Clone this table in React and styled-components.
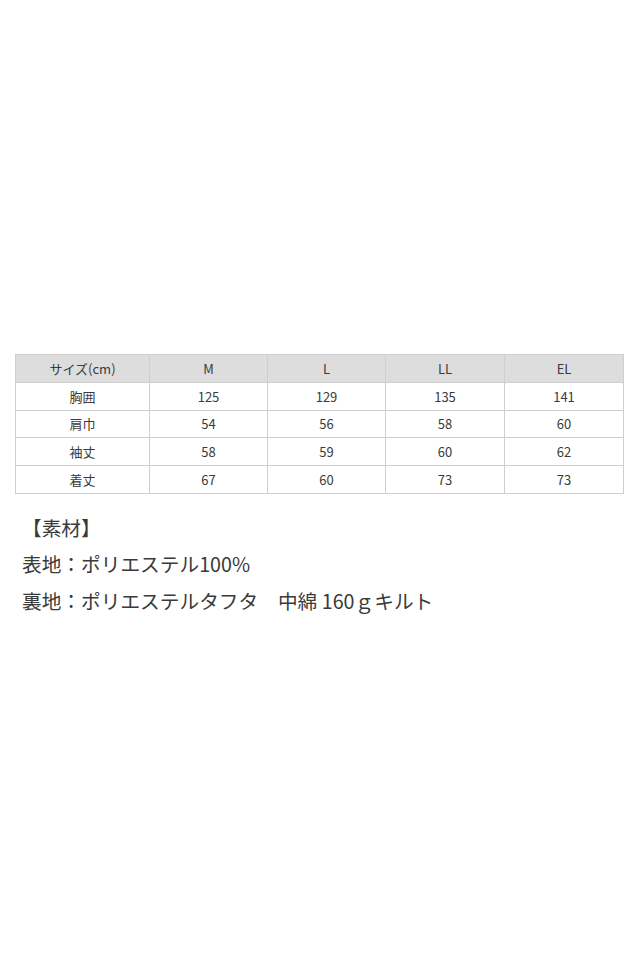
import styled, { createGlobalStyle } from "styled-components";

const GlobalStyle = createGlobalStyle`
  body {
    margin: 0;
    background: #fff;
    font-family: "Noto Sans CJK JP", "Noto Sans", sans-serif;
    color: #333;
  }
`;

const columns = [134, 118, 118, 119, 119];
const header = ["サイズ(cm)", "M", "L", "LL", "EL"];
const rows = [
  ["胸囲", "125", "129", "135", "141"],
  ["肩巾", "54", "56", "58", "60"],
  ["袖丈", "58", "59", "60", "62"],
  ["着丈", "67", "60", "73", "73"],
];

function App() {
  return (
    <Page>
      <GlobalStyle />
      <SizeTable>
        <colgroup>
          {columns.map((w, i) => (
            <col key={i} style={{ width: w }} />
          ))}
        </colgroup>
        <thead>
          <tr>
            {header.map((h) => (
              <HeadCell key={h}>{h}</HeadCell>
            ))}
          </tr>
        </thead>
        <tbody>
          {rows.map((row) => (
            <tr key={row[0]}>
              {row.map((v, i) => (
                <Cell key={i}>{v}</Cell>
              ))}
            </tr>
          ))}
        </tbody>
      </SizeTable>
      <Material>
        <Line>【素材】</Line>
        <Line>表地：ポリエステル100%</Line>
        <Line>裏地：ポリエステルタフタ　中綿 160ｇキルト</Line>
      </Material>
    </Page>
  );
}

const Page = styled.div`
  padding: 354px 17px 0 15px;
  min-height: 960px;
  box-sizing: border-box;
`;

const SizeTable = styled.table`
  width: 608px;
  border-collapse: collapse;
  table-layout: fixed;
  font-size: 13px;
  color: #3a3a3a;
`;

const HeadCell = styled.th`
  height: 26.8px;
  padding: 0;
  font-weight: 400;
  background: #dddddd;
  border: 1px solid #cfcfcf;
  text-align: center;
`;

const Cell = styled.td`
  height: 26.8px;
  padding: 0;
  border: 1px solid #cfcfcf;
  text-align: center;
`;

const Material = styled.div`
  margin-top: 16px;
  padding-left: 7px;
  font-size: 19.7px;
  line-height: 36.5px;
  color: #3a3a3a;
`;

const Line = styled.div``;

export default App;
